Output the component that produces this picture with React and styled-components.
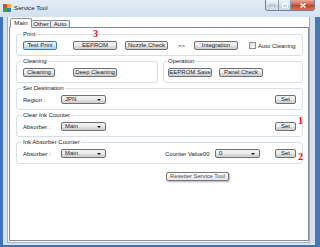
import React from 'react';
import styled, { createGlobalStyle } from 'styled-components';

const GlobalStyle = createGlobalStyle`
  html, body {
    margin: 0;
    padding: 0;
  }
  body {
    width: 320px;
    height: 247px;
    overflow: hidden;
    background: #3f72b8;
    font-family: "Liberation Sans", Arial, sans-serif;
  }
`;

const Window = styled.div`
  position: relative;
  width: 320px;
  height: 247px;
  display: flex;
  flex-direction: column;
  background: #d6e2f0;
`;

const TitleBar = styled.div`
  height: 17px;
  display: flex;
  align-items: flex-start;
  padding-left: 3px;
  background: linear-gradient(#e4edf7, #d3e0ef);
`;

const AppIcon = styled.svg`
  margin-top: 4px;
  width: 8px;
  height: 8px;
`;

const Title = styled.span`
  margin: 4px 0 0 3px;
  font-size: 6.2px;
  line-height: 7px;
  color: #1b1b1b;
`;

const CaptionButtons = styled.div`
  margin-left: auto;
  margin-right: 5px;
  display: flex;
  height: 10px;
  border: 1px solid #6f7f96;
  border-top: none;
  border-radius: 0 0 3px 3px;
  overflow: hidden;
`;

const CaptionButton = styled.div`
  width: ${p => p.$w}px;
  display: flex;
  align-items: center;
  justify-content: center;
  border-left: ${p => (p.$first ? 'none' : '1px solid #8c9bb0')};
  background: ${p =>
    p.$close
      ? 'linear-gradient(#e9a999, #cf5a46 50%, #c3402c 51%, #d9745c)'
      : 'linear-gradient(#eef3fa, #d8e3f0 50%, #c6d4e6 51%, #d2deec)'};
`;

const Middle = styled.div`
  flex: 1;
  display: flex;
  border-left: 3px solid #3f72b8;
  border-right: 5px solid #4677bb;
  border-bottom: 2px solid #3f72b8;
  padding: 0 5px 2px 4px;
  min-height: 0;
`;

const Client = styled.div`
  flex: 1;
  display: flex;
  flex-direction: column;
  background: #ffffff;
  border: 1px solid #9fb0c6;
  border-top: none;
  padding-left: 1px;
  min-height: 0;
`;

const TabStrip = styled.div`
  height: 10px;
  display: flex;
  align-items: flex-end;
  padding-left: 1px;
  position: relative;
  z-index: 1;
`;

const Tab = styled.div`
  width: ${p => p.$w}px;
  height: ${p => (p.$active ? 10 : 7)}px;
  margin-bottom: ${p => (p.$active ? -1 : 0)}px;
  margin-left: ${p => (p.$first ? 0 : -1)}px;
  box-sizing: border-box;
  border: 1px solid #898c95;
  border-bottom: ${p => (p.$active ? '1px solid #ffffff' : 'none')};
  border-radius: 2px 2px 0 0;
  background: ${p => (p.$active ? '#ffffff' : 'linear-gradient(#f3f3f3, #e3e3e3)')};
  font-size: 6.2px;
  line-height: ${p => (p.$active ? 8 : 6)}px;
  text-align: center;
  color: #1b1b1b;
`;

const TabPanel = styled.div`
  flex: 1;
  display: flex;
  flex-direction: column;
  gap: 1px;
  border: 1px solid #898c95;
  padding: 2px 5px 0 6px;
  margin-bottom: 1px;
`;

const Group = styled.fieldset`
  margin: 0;
  min-width: 0;
  flex: ${p => (p.$flex ? 1 : 'none')};
  border: 1px solid #d5dfe5;
  border-radius: 3px;
  padding: 3px 6px 5px ${p => p.$pl ?? 6}px;
`;

const Legend = styled.legend`
  padding: 0 1px;
  margin-left: -1px;
  font-size: 6px;
  line-height: 8px;
  color: #1b1b1b;
`;

const GroupPair = styled.div`
  display: flex;
  gap: 5px;
`;

const Row = styled.div`
  height: 9px;
  display: flex;
  align-items: center;
`;

const Button = styled.button`
  width: ${p => p.$w}px;
  height: 9px;
  margin: 0 0 0 ${p => (p.$ml === 'auto' ? 'auto' : `${p.$ml || 0}px`)};
  padding: 0;
  box-sizing: border-box;
  border: 1px solid ${p => (p.$default ? '#3c7fb1' : '#707070')};
  border-radius: 2px;
  background: ${p =>
    p.$default
      ? 'linear-gradient(#eaf5fc, #dcecf8 50%, #c4e0f4 51%, #b6d6ee)'
      : 'linear-gradient(#f2f2f2, #ebebeb 50%, #dddddd 51%, #cfcfcf)'};
  font-family: "Liberation Sans", Arial, sans-serif;
  font-size: 6px;
  line-height: 7px;
  color: #1b1b1b;
  white-space: nowrap;
`;

const Text = styled.span`
  margin-left: ${p => p.$ml || 0}px;
  width: ${p => (p.$w ? `${p.$w}px` : 'auto')};
  flex: none;
  font-size: 6px;
  line-height: 8px;
  color: #1b1b1b;
  white-space: nowrap;
`;

const Checkbox = styled.span`
  margin-left: ${p => p.$ml || 0}px;
  width: 7px;
  height: 7px;
  box-sizing: border-box;
  border: 1px solid #8e8f8f;
  background: linear-gradient(135deg, #dcdcdc, #fbfbfb);
`;

const Select = styled.div`
  position: relative;
  width: ${p => p.$w}px;
  height: 9px;
  margin-left: ${p => p.$ml || 0}px;
  box-sizing: border-box;
  padding-left: 3px;
  border: 1px solid #707070;
  border-radius: 2px;
  background: linear-gradient(#f2f2f2, #ebebeb 50%, #dddddd 51%, #cfcfcf);
  font-size: 6px;
  line-height: 7px;
  color: #1b1b1b;

  &::after {
    content: '';
    position: absolute;
    right: 4px;
    top: 3px;
    border-left: 2px solid transparent;
    border-right: 2px solid transparent;
    border-top: 2px solid #1b1b1b;
  }
`;

const Tooltip = styled.div`
  position: absolute;
  left: 166px;
  top: 172px;
  height: 9px;
  box-sizing: border-box;
  padding: 0 3px;
  border: 1px solid #767676;
  border-radius: 2px;
  background: linear-gradient(#ffffff, #e4e5f0);
  box-shadow: 1px 1px 2px rgba(0, 0, 0, 0.3);
  font-size: 5.8px;
  line-height: 7px;
  color: #4c4c4c;
  white-space: nowrap;
`;

const Mark = styled.span`
  position: absolute;
  left: ${p => p.$x}px;
  top: ${p => p.$y}px;
  font-family: "Liberation Serif", "Times New Roman", serif;
  font-weight: bold;
  font-size: 10px;
  line-height: 10px;
  color: #e01010;
`;

export default function App() {
  return (
    <>
      <GlobalStyle />
      <Window>
        <TitleBar>
          <AppIcon viewBox="0 0 8 8">
            <rect x="0" y="0" width="4" height="4" fill="#e2452f" />
            <rect x="4" y="0" width="4" height="4" fill="#f3b23a" />
            <rect x="0" y="4" width="4" height="4" fill="#3aa34a" />
            <rect x="4" y="4" width="4" height="4" fill="#3a78c9" />
          </AppIcon>
          <Title>Service Tool</Title>
          <CaptionButtons>
            <CaptionButton $w={12} $first>
              <svg width="6" height="4" viewBox="0 0 6 4">
                <rect x="0" y="2" width="6" height="2" fill="#ffffff" stroke="#43516a" strokeWidth="0.5" />
              </svg>
            </CaptionButton>
            <CaptionButton $w={11}>
              <svg width="6" height="5" viewBox="0 0 6 5">
                <rect x="0.5" y="0.5" width="5" height="4" fill="none" stroke="#ffffff" strokeWidth="1" />
              </svg>
            </CaptionButton>
            <CaptionButton $w={23} $close>
              <svg width="6" height="5" viewBox="0 0 6 5">
                <path d="M0.5 0.5 L5.5 4.5 M5.5 0.5 L0.5 4.5" stroke="#ffffff" strokeWidth="1.4" />
              </svg>
            </CaptionButton>
          </CaptionButtons>
        </TitleBar>
        <Middle>
          <Client>
            <TabStrip>
              <Tab $w={22} $active $first>Main</Tab>
              <Tab $w={20}>Other</Tab>
              <Tab $w={20}>Auto</Tab>
            </TabStrip>
            <TabPanel>
              <Group>
                <Legend>Print</Legend>
                <Row>
                  <Button $w={34} $default>Test Print</Button>
                  <Button $w={44} $ml={16}>EEPROM</Button>
                  <Button $w={43} $ml={8}>Nozzle Check</Button>
                  <Text $ml={10}>&gt;&gt;</Text>
                  <Button $w={44} $ml={9}>Integration</Button>
                  <Checkbox $ml={11} />
                  <Text $ml={2}>Auto Cleaning</Text>
                </Row>
              </Group>
              <GroupPair>
                <Group $flex>
                  <Legend>Cleaning</Legend>
                  <Row>
                    <Button $w={32}>Cleaning</Button>
                    <Button $w={44} $ml={18}>Deep Cleaning</Button>
                  </Row>
                </Group>
                <Group $flex $pl={4}>
                  <Legend>Operation</Legend>
                  <Row>
                    <Button $w={44}>EEPROM Save</Button>
                    <Button $w={44} $ml={7}>Panel Check</Button>
                  </Row>
                </Group>
              </GroupPair>
              <Group>
                <Legend>Set Destination</Legend>
                <Row>
                  <Text $w={38}>Region :</Text>
                  <Select $w={45}>JPN</Select>
                  <Button $w={21} $ml="auto">Set</Button>
                </Row>
              </Group>
              <Group>
                <Legend>Clear Ink Counter</Legend>
                <Row>
                  <Text $w={38}>Absorber :</Text>
                  <Select $w={45}>Main</Select>
                  <Button $w={21} $ml="auto">Set</Button>
                </Row>
              </Group>
              <Group>
                <Legend>Ink Absorber Counter</Legend>
                <Row>
                  <Text $w={38}>Absorber :</Text>
                  <Select $w={45}>Main</Select>
                  <Text $ml={59}>Counter Value00 :</Text>
                  <Select $w={45} $ml={2}>0</Select>
                  <Button $w={21} $ml="auto">Set</Button>
                </Row>
              </Group>
            </TabPanel>
          </Client>
        </Middle>
        <Tooltip>Resetter Service Tool</Tooltip>
        <Mark $x={93} $y={29}>3</Mark>
        <Mark $x={298} $y={116}>1</Mark>
        <Mark $x={298} $y={152}>2</Mark>
      </Window>
    </>
  );
}
